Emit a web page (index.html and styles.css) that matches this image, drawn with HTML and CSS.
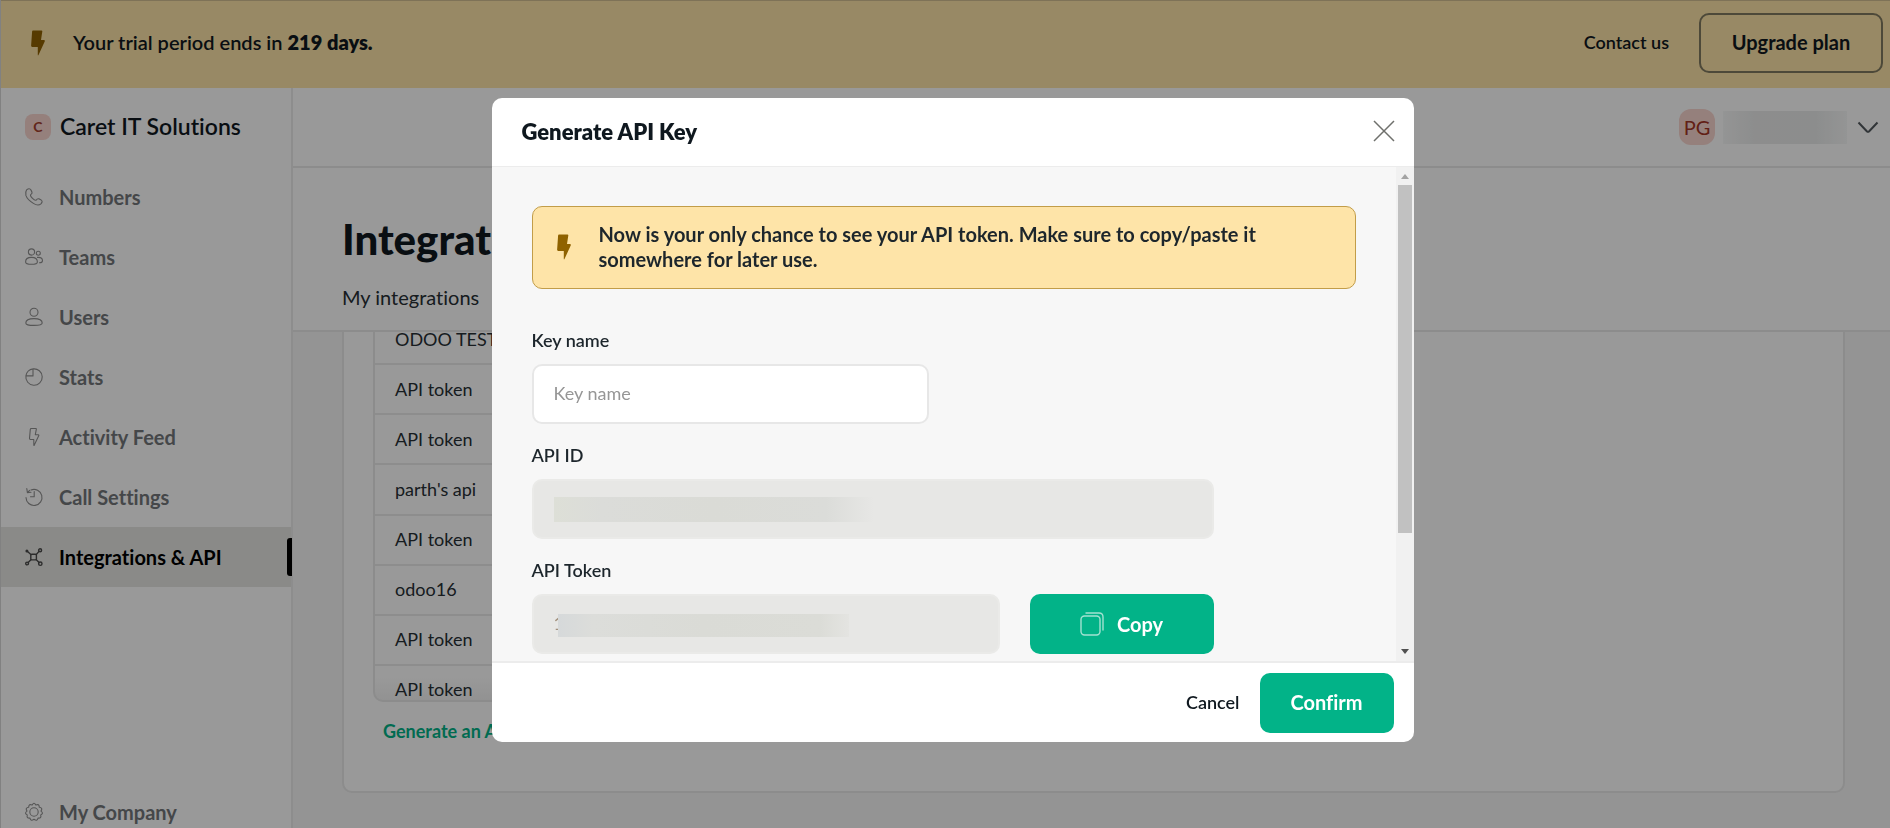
FILE: index.html
```html
<!DOCTYPE html>
<html lang="en">
<head>
<meta charset="utf-8">
<title>Integrations &amp; API</title>
<link rel="stylesheet" href="styles.css">
</head>
<body>
<div class="page">
  <div class="banner">
    <svg class="bolt" viewBox="0 0 14 26" aria-hidden="true"><path d="M2 .5h8.500q1 0 .8 1L10 10h3q1.200.2.700 1.600L7.500 25q-.7 1-.7-.3V17H1.200Q0 16.800.1 15.700L1.100 1.500Q1.200.5 2 .5z"/></svg>
    <p class="banner-text">Your trial period ends in <strong>219 days.</strong></p>
    <a class="contact" href="#">Contact us</a>
    <button class="upgrade" type="button">Upgrade plan</button>
  </div>

  <div class="shell">
    <aside class="sidebar">
      <div class="company"><span class="company-badge">C</span><span>Caret IT Solutions</span></div>
      <nav class="nav">
        <a class="nav-item" href="#"><svg class="icon" viewBox="0 0 18 18"><path d="M1.600 1.900Q4.500-.4 6 2.100l1 2.200q.4 1.300-1.300 2.300-.9 1 1.600 3.600t3.800 2q1.200-1.900 2.700-1.400l2.400 1.300q2 1.200-.3 3.700-2.800 2.600-7.500-.4Q2.200 11.500.9 7.400.2 3.900 1.600 1.900z"/></svg>Numbers</a>
        <a class="nav-item" href="#"><svg class="icon" viewBox="0 0 18 18"><circle cx="6.500" cy="4" r="3.100"/><path d="M6.500 9.400c4.300 0 5.900 1.500 5.900 4.600 0 1.800-1.500 2.300-5.900 2.300S.6 15.800.6 14c0-3.100 1.600-4.600 5.900-4.600z"/><circle cx="13.300" cy="5.200" r="2"/><path d="M12.500 9.400c3.300-.3 5 1 5 3.300 0 1.400-.9 2-3 2"/></svg>Teams</a>
        <a class="nav-item" href="#"><svg class="icon" viewBox="0 0 18 18"><circle cx="9" cy="4.200" r="4"/><path d="M9 10.600c5.500 0 8.200 1.500 8.200 4.400 0 1.800-2.500 2.400-8.200 2.400S.8 16.800.8 15c0-2.900 2.700-4.400 8.200-4.400z"/></svg>Users</a>
        <a class="nav-item" href="#"><svg class="icon" viewBox="0 0 18 18"><path d="M.9 7.900H8V.9A8 8 0 0 0 .9 7.900zM.9 7.900A8.200 8.200 0 1 0 8 .9"/></svg>Stats</a>
        <a class="nav-item" href="#"><svg class="icon" viewBox="0 0 18 18"><path d="M6.200.5h4.500q.8 0 .6.800L10.300 6.700h3q.8.300.4 1.100L9.300 17.100q-.5.800-.5-.3v-5.300H5.400q-.9-.1-.9-1L5.300 1.400q.1-.9.9-.9z"/></svg>Activity Feed</a>
        <a class="nav-item" href="#"><svg class="icon" viewBox="0 0 18 18"><path d="M1.800.6 2.400 4.600 6 4.200M2.400 4.600 4.600 2.300M6 2A8 8 0 1 1 1 9.500M9.200 3.500v5.300H5.500"/></svg>Call Settings</a>
        <a class="nav-item active" href="#" aria-current="page"><svg class="icon" viewBox="0 0 18 18"><rect x="5.800" y="6.300" width="5.600" height="5.600" rx="1"/><path d="M11.300 6.500 14 3.400M5.900 6.500 2.800 3.700M5.900 11.800l-2.700 2.700M11.300 11.800l2.800 2.700"/><circle cx="15.100" cy="2.200" r="1.500"/><circle cx="1.900" cy="3" r=".8"/><circle cx="2.100" cy="15.500" r="1.400"/><circle cx="15.300" cy="15.700" r="1.700"/></svg>Integrations &amp; API</a>
      </nav>
      <nav class="nav nav-bottom">
        <a class="nav-item" href="#"><svg class="icon" viewBox="0 0 18 18"><circle cx="9" cy="9" r="4.200"/><path d="M9 .2Q10.200.4 10.800 2q1.600-.6 2.700-.2.900.9.800 2.500 1.700.2 2.400 1.200.3 1.300-.7 2.600 1.400 1 1.500 2.100-.3 1.200-1.800 1.700.5 1.600-.1 2.600-1 .8-2.600.6-.3 1.600-1.400 2.200-1.200.1-2.600-1-1.400 1.100-2.600 1-1.100-.6-1.400-2.200-1.600.2-2.600-.6-.6-1-.1-2.600Q.8 11.400.5 10.200.6 9.100 2 8.100 1 6.800 1.300 5.500 2 4.500 3.700 4.300q-.1-1.600.8-2.500Q5.600 1.400 7.200 2 7.800.4 9 .2z"/></svg>My Company</a>
      </nav>
    </aside>

    <main class="main">
      <div class="topbar">
        <span class="avatar">PG</span>
        <span class="user-name"></span>
        <button class="user-toggle" type="button" aria-label="Account menu"><svg class="chevron" viewBox="0 0 22 13"><path d="M1.500 1.500 9.800 10.200q1.200 1.200 2.400 0L20.500 1.500"/></svg></button>
      </div>
      <header class="page-head">
        <h1>Integrations</h1>
        <a class="tab" href="#">My integrations</a>
      </header>
      <div class="content">
        <section class="card">
          <div class="token-list">
            <table class="tokens">
              <tbody>
                <tr><td>ODOO TEST</td></tr>
                <tr><td>API token</td></tr>
                <tr><td>API token</td></tr>
                <tr><td>parth's api</td></tr>
                <tr><td>API token</td></tr>
                <tr><td>odoo16</td></tr>
                <tr><td>API token</td></tr>
                <tr><td>API token</td></tr>
              </tbody>
            </table>
          </div>
          <a class="generate" href="#">Generate an API key</a>
        </section>
      </div>
    </main>
  </div>
</div>

<div class="overlay">
  <form class="modal" role="dialog" aria-modal="true" aria-labelledby="modal-title">
    <div class="modal-head">
      <h2 id="modal-title">Generate API Key</h2>
      <button class="close" type="button" aria-label="Close"><svg viewBox="0 0 22 22"><path d="M1 1l20 20M21 1 1 21"/></svg></button>
    </div>
    <div class="modal-body">
      <div class="fields">
        <div class="notice">
          <svg class="bolt" viewBox="0 0 14 26" aria-hidden="true"><path d="M2 .5h8.500q1 0 .8 1L10 10h3q1.200.2.700 1.600L7.500 25q-.7 1-.7-.3V17H1.200Q0 16.800.1 15.700L1.100 1.500Q1.200.5 2 .5z"/></svg>
          <p>Now is your only chance to see your API token. Make sure to copy/paste it somewhere for later use.</p>
        </div>
        <div class="field name-field">
          <label for="key-name">Key name</label>
          <input id="key-name" type="text" placeholder="Key name">
        </div>
        <div class="field wide-field">
          <label for="api-id">API ID</label>
          <div class="masked"><input id="api-id" type="text" readonly><span class="mask id-mask"></span></div>
        </div>
        <div class="field wide-field">
          <label for="api-token">API Token</label>
          <div class="token-row">
            <div class="masked"><input id="api-token" type="text" value="1" readonly><span class="mask token-mask"></span></div>
            <button class="primary copy" type="button"><svg viewBox="0 0 24 24"><rect x="1" y="4" width="19" height="19" rx="3.500"/><path d="M6 1h13q4 0 4 4v13"/></svg>Copy</button>
          </div>
        </div>
      </div>
      <div class="scrollbar" aria-hidden="true">
        <svg class="arrow up" viewBox="0 0 8 5"><path d="M0 5 4 0l4 5z"/></svg>
        <div class="track"><div class="thumb"></div></div>
        <svg class="arrow" viewBox="0 0 8 5"><path d="M0 0h8L4 5z"/></svg>
      </div>
    </div>
    <div class="modal-foot">
      <button class="cancel" type="button">Cancel</button>
      <button class="primary" type="submit">Confirm</button>
    </div>
  </form>
</div>
</body>
</html>
```
FILE: styles.css
```css
* { box-sizing: border-box; }
body { margin: 0; font-family: Lato, "Open Sans", sans-serif; font-size: 20px; line-height: 25px; font-variant-ligatures: none; color: #0f181f; }
h1, h2, p { margin: 0; }
a { color: inherit; text-decoration: none; }
button, input { font: inherit; color: inherit; }
button { padding: 0; border: 0; background: none; cursor: pointer; }

.page { height: 100vh; display: flex; flex-direction: column; overflow: hidden; border-left: 1px solid #d8d8d8; }

.banner { display: flex; align-items: center; height: 88px; flex: none; padding: 0 7px 4px 30px; background: #fee4a8; border-top: 1px solid #d3bf91; font-weight: 600; }
.bolt { width: 14px; height: 26px; flex: none; fill: #8f6200; }
.banner-text { flex: 1; margin-left: 28px; }
.banner-text strong { font-weight: 800; }
.contact { font-size: 18px; font-weight: 600; margin-right: 30px; }
.upgrade { width: 184px; height: 60px; border: 2px solid #807a60; border-radius: 10px; font-weight: 700; }

.shell { flex: 1; display: flex; min-height: 0; }
.sidebar { width: 292px; flex: none; display: flex; flex-direction: column; border-right: 2px solid #ebebeb; background: #fff; }
.company { display: flex; align-items: center; gap: 9px; height: 79px; padding: 0 0 2px 24px; font-size: 23px; font-weight: 600; }
.company-badge { width: 26px; height: 26px; border-radius: 8px; background: #f9d5cf; color: #a3402e; font-size: 14px; font-weight: 700; text-align: center; }
.nav-item { display: flex; align-items: center; gap: 16px; height: 60px; padding-left: 24px; color: #73777b; font-weight: 700; }
.icon { width: 18px; height: 18px; overflow: visible; fill: none; stroke: #909090; stroke-width: 1.1; stroke-linejoin: round; stroke-linecap: round; }
.active { position: relative; background: #e7e7e3; color: #000; }
.active .icon { stroke: #4a4a4a; stroke-width: 1.4; }
.active::after { content: ""; position: absolute; right: -1px; top: 11px; width: 5px; height: 38px; border-radius: 3px 0 0 3px; background: #000; }
.nav-bottom { margin-top: auto; margin-bottom: -14px; }

.main { flex: 1; min-width: 0; display: flex; flex-direction: column; background: #f7f7f7; }
.topbar { display: flex; align-items: center; justify-content: flex-end; height: 80px; flex: none; padding-right: 11px; background: #fff; border-bottom: 2px solid #e9e9e9; }
.avatar { width: 36px; height: 36px; border-radius: 12px; background: #f9d5cf; color: #a33525; line-height: 36px; text-align: center; }
.user-name { width: 124px; height: 33px; margin: 0 10px 0 8px; background: linear-gradient(90deg, #f7f8f8, #ebecec 25%, #eaecec 75%, #f7f8f8); }
.user-toggle { display: flex; }
.chevron { width: 22px; height: 13px; fill: none; stroke: #53595e; stroke-width: 2; }
.page-head { display: flex; flex-direction: column; align-items: flex-start; gap: 22px; height: 164px; flex: none; padding: 47px 49px 0; background: #fff; border-bottom: 2px solid #e9e9e9; }
.page-head h1 { font-size: 42px; line-height: 48px; font-weight: 900; }
.tab { color: #272f35; }

.content { flex: 1; min-height: 0; overflow: hidden; padding: 0 45px 35px 49px; display: flex; }
.card { flex: 1; padding: 0 29px; border: 2px solid #e9e9e9; border-top: 0; border-radius: 0 0 10px 10px; background: #fff; }
.token-list { width: 70%; height: 370px; overflow: hidden; border: 2px solid #e9e9e9; border-top: 0; border-radius: 0 0 10px 10px; background: linear-gradient(#fff 94%, #f4f4f4); }
.tokens { width: 100%; height: 400px; margin-top: -16px; border-collapse: collapse; font-size: 18px; color: #272f35; }
.tokens td { padding: 0 20px; border-bottom: 2px solid #ececec; }
.generate { display: inline-block; margin: 17px 0 0 10px; font-size: 18px; font-weight: 700; color: #02b388; }

.overlay { position: fixed; inset: 0; display: flex; align-items: center; justify-content: center; padding: 12px 0 0 15px; background: rgba(0, 0, 0, .4); }
.modal { width: 922px; max-width: 100%; overflow: hidden; border-radius: 10px; background: #fff; }
.modal-head { display: flex; align-items: center; justify-content: space-between; height: 69px; padding: 0 19px 2px 30px; border-bottom: 1px solid #ececec; }
.modal-head h2 { font-size: 22px; font-weight: 800; }
.close { display: flex; }
.close svg { width: 22px; height: 22px; fill: none; stroke: #6f706c; stroke-width: 1.5; }
.modal-body { display: flex; height: 494px; overflow: hidden; background: #f7f7f7; }
.fields { flex: 1; padding: 39px 40px 0; }
.notice { display: flex; align-items: center; min-height: 83px; padding: 0 80px 2px 24px; border: 1px solid #c29d49; border-radius: 10px; background: #fee4a8; font-weight: 700; color: #1d262c; }
.notice p { margin-left: 28px; }
.notice + .field { margin-top: 39px; }
.field { display: flex; flex-direction: column; gap: 12px; margin-top: 19px; }
.field label { font-size: 18px; line-height: 24px; font-weight: 600; color: #1d262c; }
.field input { width: 100%; height: 60px; padding: 0 20px 2px; border: 2px solid #e7e7e7; border-radius: 10px; background: #fff; font-size: 18px; outline: 0; }
.field input::placeholder { color: #969696; }
.name-field { width: 397px; }
.wide-field { width: 682px; }
.masked { position: relative; flex: 1; display: flex; }
.masked input { background: #e7e7e5; color: #a2907c; border-color: #eaeae8; }
.mask { position: absolute; }
.id-mask { left: 22px; top: 18px; width: 320px; height: 25px; background: linear-gradient(90deg, #dddfd7, #dbdcd9 15%, #dadbd6 50%, #dbdcd9 85%, #e7e7e5); }
.token-mask { left: 26px; top: 20px; width: 291px; height: 23px; background: linear-gradient(90deg, #d6d9da, #dcddda 12%, #dadbd6 50%, #dbdcd7 90%, #e4e4e1); }
.token-row { display: flex; gap: 30px; }
.primary { width: 134px; height: 60px; border-radius: 10px; background: #02b388; color: #fff; font-weight: 700; }
.copy { width: 184px; display: flex; align-items: center; justify-content: center; gap: 13px; }
.copy svg { width: 24px; height: 24px; fill: none; stroke: #a3e2d1; stroke-width: 1.4; stroke-linecap: round; }
.scrollbar { width: 18px; flex: none; display: flex; flex-direction: column; align-items: center; background: #f1f1f1; padding: 7px 0; }
.arrow { width: 8px; height: 5px; flex: none; fill: #505050; }
.up { fill: #a3a3a3; }
.track { flex: 1; padding: 6px 0; }
.thumb { width: 14px; height: 76%; background: #c1c1c1; }
.modal-foot { display: flex; align-items: center; justify-content: flex-end; gap: 20px; height: 81px; padding: 0 20px; border-top: 2px solid #ececec; }
.cancel { font-size: 18px; font-weight: 600; }
```
